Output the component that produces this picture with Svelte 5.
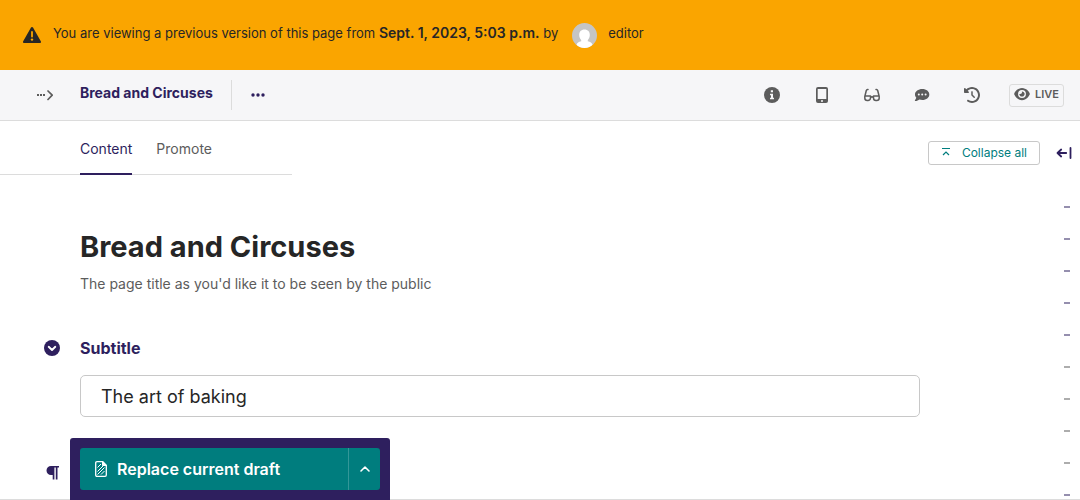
<script lang="ts">
  let subtitle = $state('The art of baking');
  const marks = ['h', 'h', 'h', 'h', 'h', 'f', 'f', 'f', 'f', 'h'];
</script>

<div class="page">
  <div class="banner" role="status">
    <svg class="warning" viewBox="0 0 18 16" width="18" height="16" aria-hidden="true">
      <path fill="currentColor" d="M9 0c.5 0 .8.2 1 .6l7.8 13.600c.5.9 0 1.800-1 1.800H1.200c-1 0-1.500-.9-1-1.800L8 .6C8.200.2 8.500 0 9 0z" />
      <path d="M9 5v4.500" stroke="#faa500" stroke-width="1.800" stroke-linecap="round" />
      <circle cx="9" cy="12.600" r="1.200" fill="#faa500" />
    </svg>
    <p>You are viewing a previous version of this page from <b>Sept. 1, 2023, 5:03 p.m.</b> by</p>
    <svg class="avatar" viewBox="0 0 25 25" width="25" height="25" aria-hidden="true">
      <clipPath id="avatar-clip"><circle cx="12.500" cy="12.500" r="12.500" /></clipPath>
      <g clip-path="url(#avatar-clip)">
        <rect width="25" height="25" fill="#c5c5c5" />
        <path fill="#fff" d="M12.500 6.500c3.400 0 5.300 2.300 5.300 5.500 0 2-.8 3.900-2 5v1.200c2.500.8 4.200 1.300 4.700 3.800V25h-16v-3c.5-2.500 2.200-3 4.700-3.800V17c-1.200-1.100-2-3-2-5 0-3.200 1.900-5.500 5.300-5.500z" />
      </g>
    </svg>
    <span>editor</span>
  </div>

  <header>
    <button class="icon expand" aria-label="Toggle breadcrumbs">
      <svg viewBox="0 0 16 16" width="16" height="16">
        <path fill="currentColor" d="M0 7h2v2H0zM3 7h2v2H3zM6 7h2v2H6z" />
        <path d="M11 4l4.200 4.200L11 12.500" fill="none" stroke="currentColor" stroke-width="1.700" stroke-linecap="round" stroke-linejoin="round" />
      </svg>
    </button>
    <a class="crumb" href="#page">Bread and Circuses</a>
    <button class="icon more" aria-label="Actions">
      <svg viewBox="0 0 16 16" width="16" height="16" fill="currentColor">
        <circle cx="3" cy="8" r="1.700" /><circle cx="8" cy="8" r="1.700" /><circle cx="13" cy="8" r="1.700" />
      </svg>
    </button>
    <div class="tools">
      <button class="icon" aria-label="Info">
        <svg viewBox="0 0 16 16" width="16" height="16">
          <circle cx="8" cy="8" r="8" fill="currentColor" />
          <path fill="#f6f6f8" d="M6.800 3.200h2.200v2H6.800zM6 6.700h3v4.100h1v1.500H6v-1.500h1V8.200H6z" />
        </svg>
      </button>
      <button class="icon" aria-label="Preview">
        <svg viewBox="0 0 16 16" width="16" height="16">
          <path fill="currentColor" fill-rule="evenodd" d="M4 0h8a2 2 0 0 1 2 2v12a2 2 0 0 1-2 2H4a2 2 0 0 1-2-2V2a2 2 0 0 1 2-2zm-.3 2v10h8.600V2zM8 13a1 1 0 1 0 0 2 1 1 0 0 0 0-2z" />
        </svg>
      </button>
      <button class="icon" aria-label="Checks">
        <svg viewBox="0 0 16 16" width="16" height="16" fill="none" stroke="currentColor" stroke-width="1.500" stroke-linecap="round" stroke-linejoin="round">
          <path d="M4 2.500h-.5c-.7 0-1 .4-1.200 1L.8 9.500V11a2.500 2.500 0 0 0 2.500 2.500h.7A2.500 2.500 0 0 0 6.500 11V9H1M12 2.500h.5c.7 0 1 .4 1.200 1l1.500 6V11a2.500 2.500 0 0 1-2.500 2.500H12A2.500 2.500 0 0 1 9.500 11V9H15M6.500 10.500c.8-.8 2.200-.8 3 0" />
        </svg>
      </button>
      <button class="icon" aria-label="Comments">
        <svg viewBox="0 0 16 16" width="16" height="16">
          <path fill="currentColor" d="M8.300 2C12.300 2 15.300 4.400 15.300 7.500S12.300 13 8.300 13c-1 0-2-.2-2.900-.5-1 .8-2.400 1.500-4.200 1.500-.4 0-.5-.4-.3-.7.600-.7 1.200-1.500 1.400-2.500C1.500 9.900 1 8.700 1 7.500 1 4.400 4.300 2 8.300 2z" />
          <g fill="#f6f6f8"><circle cx="4.800" cy="7.500" r="1" /><circle cx="8.200" cy="7.500" r="1" /><circle cx="11.600" cy="7.500" r="1" /></g>
        </svg>
      </button>
      <button class="icon" aria-label="History">
        <svg viewBox="0 0 512 512" width="16" height="16">
          <path fill="currentColor" d="M75 75L41 41C25.900 25.900 0 36.600 0 57.900V168c0 13.300 10.700 24 24 24H134.100c21.400 0 32.100-25.900 17-41l-30.800-30.800C155 85.500 203 64 256 64c106 0 192 86 192 192s-86 192-192 192c-40.800 0-78.600-12.700-109.700-34.400c-14.500-10.100-34.400-6.600-44.600 7.900s-6.600 34.400 7.900 44.600C151.200 495 201.700 512 256 512c141.400 0 256-114.600 256-256S397.400 0 256 0C185.300 0 121.300 28.700 75 75zm181 53c-13.300 0-24 10.700-24 24V256c0 6.400 2.500 12.500 7 17l72 72c9.400 9.400 24.600 9.400 33.900 0s9.400-24.600 0-33.900l-65-65V152c0-13.300-10.700-24-24-24z" />
        </svg>
      </button>
    </div>
    <a class="live" href="#live">
      <svg viewBox="0 0 576 512" width="16" height="14" aria-hidden="true">
        <path fill="currentColor" d="M288 32c-80.800 0-145.500 36.800-192.600 80.600C48.600 156 17.300 208 2.500 243.700c-3.300 7.900-3.300 16.700 0 24.600C17.300 304 48.600 356 95.400 399.400C142.500 443.200 207.200 480 288 480s145.500-36.800 192.600-80.600c46.800-43.500 78.100-95.400 93-131.100c3.300-7.900 3.300-16.700 0-24.600c-14.900-35.700-46.200-87.700-93-131.100C433.500 68.800 368.800 32 288 32zM144 256a144 144 0 1 1 288 0 144 144 0 1 1-288 0zm144-64c0 35.300-28.700 64-64 64c-7.100 0-13.900-1.200-20.300-3.300c-5.500-1.800-11.900 1.600-11.700 7.400c.3 6.900 1.300 13.800 3.200 20.700c13.700 51.200 66.400 81.600 117.600 67.900s81.600-66.400 67.900-117.600c-11.100-41.500-47.800-69.400-88.600-71.100c-5.800-.2-9.200 6.100-7.400 11.700c2.100 6.400 3.300 13.200 3.300 20.300z" />
      </svg>
      LIVE
    </a>
  </header>

  <main>
    <div class="editor">
      <nav>
        <a class="active" href="#content">Content</a>
        <a href="#promote">Promote</a>
      </nav>
      <section class="title">
        <h1>Bread and Circuses</h1>
        <p>The page title as you'd like it to be seen by the public</p>
      </section>
      <section class="field">
        <div class="heading">
          <button class="icon" aria-label="Toggle section">
            <svg viewBox="0 0 16 16" width="16" height="16">
              <circle cx="8" cy="8" r="8" fill="currentColor" />
              <path d="M4.700 6.800L8 10l3.300-3.200" fill="none" stroke="#fff" stroke-width="1.900" stroke-linecap="round" stroke-linejoin="round" />
            </svg>
          </button>
          <label for="subtitle">Subtitle</label>
        </div>
        <input id="subtitle" type="text" bind:value={subtitle} />
      </section>
      <svg class="pilcrow" viewBox="0 0 16 16" width="16" height="16" aria-hidden="true">
        <path fill="currentColor" d="M7 1h8v1.500h-1.500V14.500h-1.700V2.500h-1.400V14.500H8.700V10H7a4.500 4.500 0 0 1 0-9z" />
      </svg>
    </div>
    <aside>
      <div class="side-actions">
        <button class="collapse">
          <svg viewBox="0 0 10 10" width="10" height="10" fill="none" stroke="currentColor" aria-hidden="true">
            <path d="M1 1.500h8M2 8l3-3 3 3" stroke-width="1.200" />
          </svg>
          Collapse all
        </button>
        <button class="icon" aria-label="Toggle side panel">
          <svg viewBox="0 0 16 16" width="16" height="16" fill="none" stroke="currentColor" stroke-width="1.800" stroke-linecap="round" stroke-linejoin="round">
            <path d="M5.200 4.500L1.500 8l3.700 3.500M1.500 8h8.700M14.500 3v10" />
          </svg>
        </button>
      </div>
      <div class="minimap">
        {#each marks as mark}
          <i class:faint={mark === 'f'}></i>
        {/each}
      </div>
    </aside>
  </main>

  <footer>
    <div class="actions">
      <button class="replace">
        <svg viewBox="0 0 12 16" width="12" height="16" fill="none" stroke="currentColor" aria-hidden="true">
          <path d="M2 .7h5.800l3.500 3.500V14c0 .8-.5 1.300-1.300 1.300H2c-.8 0-1.300-.5-1.300-1.300V2C.7 1.200 1.200.7 2 .7z" stroke-width="1.300" />
          <path d="M7.500.7v3.800h3.800z" fill="currentColor" />
          <path d="M2.500 6.500L6 3M2.500 10.500L8 5M2.500 13.500l7-7M6 13.500l3.500-3.500" stroke-width="1" />
        </svg>
        Replace current draft
      </button>
      <button class="toggle" aria-label="More actions">
        <svg viewBox="0 0 16 16" width="16" height="16">
          <path d="M4 10l4-4 4 4" fill="none" stroke="currentColor" stroke-width="1.600" stroke-linecap="round" stroke-linejoin="round" />
        </svg>
      </button>
    </div>
  </footer>
</div>

<style>
  :global(body) {
    margin: 0;
  }
  .page {
    position: relative;
    display: flex;
    flex-direction: column;
    height: 100vh;
    overflow: hidden;
    box-sizing: border-box;
    background: #fff;
    color: #262626;
    font-family: Inter, sans-serif;
    font-size: 14px;
  }
  .page * {
    box-sizing: border-box;
  }
  button {
    display: flex;
    align-items: center;
    padding: 0;
    border: 0;
    background: none;
    color: inherit;
    font: inherit;
    cursor: pointer;
  }
  svg {
    display: block;
    flex: none;
  }
  a {
    color: inherit;
    text-decoration: none;
  }
  p,
  h1 {
    margin: 0;
  }
  .banner {
    flex: none;
    display: flex;
    align-items: center;
    min-height: 70px;
    padding: 0 23px;
    background: #faa500;
    font-size: 13px;
    line-height: 20px;
  }
  .banner p,
  .banner span {
    padding-bottom: 4px;
  }
  .banner b {
    font-size: 14px;
    font-weight: 600;
  }
  .warning {
    margin-right: 12px;
  }
  .avatar {
    margin: 0 11px 0 14px;
  }
  header {
    flex: none;
    display: flex;
    align-items: center;
    height: 51px;
    padding: 0 16px 0 37px;
    border-bottom: 1px solid #dcdcdc;
    background: #f6f6f8;
    color: #5c5c5c;
  }
  .crumb {
    margin-left: 27px;
    padding: 5px 18px 9px 0;
    border-right: 1px solid #dcdcdc;
    color: #2e1f5e;
    font-weight: 700;
    line-height: 16px;
  }
  .more {
    margin-left: 18px;
    color: #2e1f5e;
  }
  .tools {
    display: flex;
    gap: 34px;
    margin-left: auto;
  }
  .live {
    display: flex;
    align-items: center;
    gap: 5px;
    height: 23px;
    margin-left: 29px;
    padding: 0 4px 2px;
    border: 1px solid #dcdcdc;
    border-radius: 3px;
    font-size: 11px;
    font-weight: 600;
  }
  main {
    flex: 1;
    min-height: 0;
    display: flex;
    justify-content: space-between;
    border-bottom: 1px solid #dcdcdc;
  }
  .editor {
    flex: 1;
    max-width: 920px;
  }
  nav {
    display: flex;
    gap: 24px;
    width: fit-content;
    padding: 0 80px;
    border-bottom: 1px solid #dcdcdc;
    color: #5c5c5c;
    line-height: 20px;
  }
  nav a {
    margin-bottom: -1px;
    padding: 18px 0 14px;
    border-bottom: 2px solid transparent;
  }
  nav .active {
    border-color: #2e1f5e;
    color: #2e1f5e;
  }
  .title {
    padding: 52px 0 0 80px;
  }
  h1 {
    font-size: 29px;
    font-weight: 700;
    line-height: 40px;
  }
  .title p {
    margin-top: 7px;
    color: #5c5c5c;
    line-height: 20px;
  }
  .heading {
    display: flex;
    align-items: center;
    gap: 20px;
    margin-top: 44px;
    padding-left: 44px;
    color: #2e1f5e;
    font-size: 16px;
    font-weight: 700;
    line-height: 20px;
  }
  input {
    display: block;
    width: calc(100% - 80px);
    height: 42px;
    margin: 17px 0 0 80px;
    padding: 0 20px;
    border: 1px solid #c8c8c8;
    border-radius: 5px;
    background: #fff;
    color: #262626;
    font: 18px Inter, sans-serif;
  }
  .pilcrow {
    margin: 48px 0 0 44px;
    color: #2e1f5e;
  }
  aside {
    padding: 20px 8px 0 0;
  }
  .side-actions {
    display: flex;
    align-items: center;
    gap: 16px;
    color: #2e1f5e;
  }
  .collapse {
    gap: 11px;
    height: 24px;
    padding: 0 12px 2px;
    border: 1px solid #c8c8c8;
    border-radius: 3px;
    color: #007d7e;
    font-size: 12px;
  }
  .minimap {
    display: flex;
    flex-direction: column;
    align-items: flex-end;
    gap: 30px;
    padding: 41px 2px 0 0;
  }
  .minimap i {
    width: 6px;
    height: 2px;
    background: #958fae;
  }
  .minimap .faint {
    background: #adadad;
  }
  footer {
    position: absolute;
    bottom: 0;
    left: 70px;
    padding: 10px;
    border-radius: 3px 3px 0 0;
    background: #2e1f5e;
    color: #fff;
  }
  .actions {
    display: flex;
    width: 310px;
    max-width: 300px;
    height: 42px;
    border-radius: 3px;
    background: #007d7e;
  }
  .replace {
    flex: 1;
    gap: 10px;
    padding-left: 15px;
    font-size: 16px;
    font-weight: 600;
  }
  .toggle {
    justify-content: center;
    width: 32px;
    border-left: 1px solid #339798;
  }
</style>
